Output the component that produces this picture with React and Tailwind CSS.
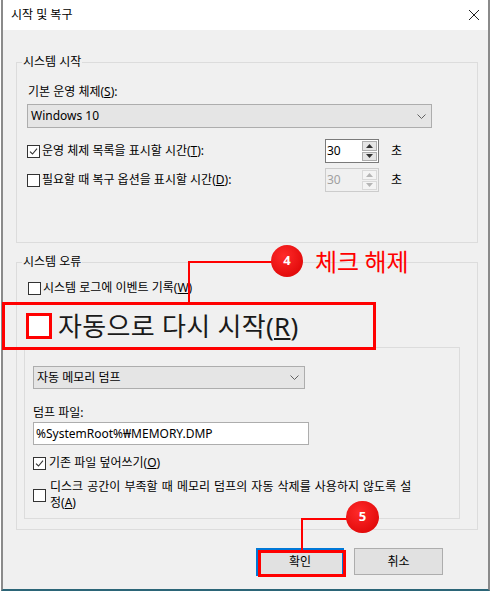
import React from 'react';

function Check({ checked }) {
  return (
    <span className="w-[13px] h-[13px] border border-[#333333] bg-white flex items-center justify-center shrink-0">
      {checked && (
        <svg width="9" height="9" viewBox="0 0 9 9">
          <path d="M1 4.6 L3.5 7 L8 1.6" stroke="#333333" strokeWidth="1.1" fill="none" />
        </svg>
      )}
    </span>
  );
}

function Chevron() {
  return (
    <svg width="9" height="5" viewBox="0 0 9 5">
      <path d="M0.5 0.5 L4.5 4.5 L8.5 0.5" stroke="#606060" strokeWidth="1" fill="none" />
    </svg>
  );
}

function Spin({ disabled }) {
  const arrow = disabled ? '#b5b5b5' : '#333333';
  return (
    <div
      className={
        'w-[54px] h-[24px] border flex ' +
        (disabled ? 'border-[#cccccc] bg-[#f0f0f0] text-[#a0a0a0]' : 'border-[#7a7a7a] bg-white text-black')
      }
    >
      <div className="flex-1 pl-[1px] text-[12px] leading-[22px]">30</div>
      <div className="w-[16px] flex flex-col gap-[1px] py-[1px] pr-[1px]">
        <div className={'flex-1 border flex items-center justify-center ' + (disabled ? 'border-[#d9d9d9] bg-[#f4f4f4]' : 'border-[#adadad] bg-[#e5e5e5]')}>
          <svg width="7" height="4" viewBox="0 0 7 4"><path d="M0 4 L3.5 0 L7 4 Z" fill={arrow} /></svg>
        </div>
        <div className={'flex-1 border flex items-center justify-center ' + (disabled ? 'border-[#d9d9d9] bg-[#f4f4f4]' : 'border-[#adadad] bg-[#e5e5e5]')}>
          <svg width="7" height="4" viewBox="0 0 7 4"><path d="M0 0 L3.5 4 L7 0 Z" fill={arrow} /></svg>
        </div>
      </div>
    </div>
  );
}

export default function App() {
  return (
    <div className="relative w-[491px] h-[591px] bg-white overflow-hidden font-['Noto_Sans','Noto_Sans_CJK_KR',sans-serif] text-[12px] text-black">
      <div className="ml-[1px] w-[489px] h-[591px] border-l-2 border-r-2 border-b-2 border-l-[#8a8a8a] border-r-[#8a8a8a] border-b-[#2b6577] flex flex-col">
        {/* title bar */}
        <div className="h-[30px] bg-white flex items-center justify-between pl-[8px] pr-[8px]">
          <span className="leading-[16px]">시작 및 복구</span>
          <svg width="12" height="12" viewBox="0 0 12 12">
            <path d="M1 1 L11 11 M11 1 L1 11" stroke="#222222" strokeWidth="1" />
          </svg>
        </div>

        <div className="flex-1 bg-[#f0f0f0] pt-[24px]">
          {/* 시스템 시작 */}
          <fieldset className="ml-[13px] w-[462px] border border-[#dcdcdc]">
            <legend className="ml-[5px] px-[1px] leading-[16px]">시스템 시작</legend>
            <div className="pl-[10px] pt-[14px] pb-[50px]">
              <div className="ml-[1px] leading-[16px]">
                기본 운영 체제(<u>S</u>):
              </div>
              <div className="mt-[4px] w-[405px] h-[24px] bg-[#e5e5e5] border border-[#adadad] flex items-center justify-between pl-[3px] pr-[5px]">
                <span className="leading-[16px]">Windows 10</span>
                <Chevron />
              </div>
              <div className="mt-[11px] flex items-center">
                <div className="w-[298px] flex items-center gap-[2px]">
                  <Check checked />
                  <span className="leading-[16px]">운영 체제 목록을 표시할 시간(<u>T</u>):</span>
                </div>
                <Spin />
                <span className="ml-[12px] leading-[16px]">초</span>
              </div>
              <div className="mt-[5px] flex items-center">
                <div className="w-[298px] flex items-center gap-[2px]">
                  <Check />
                  <span className="leading-[16px]">필요할 때 복구 옵션을 표시할 시간(<u>D</u>):</span>
                </div>
                <Spin disabled />
                <span className="ml-[12px] leading-[16px]">초</span>
              </div>
            </div>
          </fieldset>

          {/* 시스템 오류 */}
          <fieldset className="mt-[11px] ml-[13px] w-[462px] border border-[#dcdcdc]">
            <legend className="ml-[5px] px-[1px] leading-[16px]">시스템 오류</legend>
            <div className="pt-[10px] pb-[10px]">
              <div className="ml-[11px] flex items-center gap-[2px]">
                <Check />
                <span className="leading-[16px]">시스템 로그에 이벤트 기록(<u>W</u>)</span>
              </div>

              <div className="relative z-10 mt-[6px] -mb-[3px] -ml-[15px] w-[374px] h-[48px] border-[3px] border-[#ff0000] flex items-center pl-[21px] gap-[6px]">
                <span className="w-[26px] h-[26px] border-[3px] border-[#ff0000] bg-white shrink-0" />
                <span className="text-[26px] leading-[30px] text-[#1a1a1a] tracking-[0.3px]">
                  자동으로 다시 시작(<u>R</u>)
                </span>
              </div>

              <div className="ml-[7px] w-[436px] border border-[#dcdcdc] pl-[8px] pt-[18px] pb-[7px]">
                <div className="w-[272px] h-[23px] bg-[#e5e5e5] border border-[#adadad] flex items-center justify-between pl-[3px] pr-[5px]">
                  <span className="leading-[16px]">자동 메모리 덤프</span>
                  <Chevron />
                </div>
                <div className="mt-[16px] leading-[16px]">덤프 파일:</div>
                <div className="mt-[1px] w-[276px] h-[23px] bg-white border border-[#adadad] flex items-center pl-[2px]">
                  <span className="leading-[16px]">%SystemRoot%₩MEMORY.DMP</span>
                </div>
                <div className="mt-[10px] flex items-center gap-[3px]">
                  <Check checked />
                  <span className="leading-[16px]">기존 파일 덮어쓰기(<u>O</u>)</span>
                </div>
                <div className="mt-[8px] flex items-center gap-[4px]">
                  <Check />
                  <span className="leading-[16px] [word-spacing:1px]">
                    디스크 공간이 부족할 때 메모리 덤프의 자동 삭제를 사용하지 않도록 설
                    <br />
                    정(<u>A</u>)
                  </span>
                </div>
              </div>
            </div>
          </fieldset>

          {/* buttons */}
          <div className="mt-[18px] flex justify-end gap-[10px] pr-[45px]">
            <div className="relative">
              <div className="w-[88px] h-[28px] bg-[#e1e1e1] border-2 border-[#0078d7] flex items-center justify-center">
                확인
              </div>
              <div className="absolute left-[2px] top-[2px] w-[88px] h-[27px] border-[3px] border-[#ff0000]" />
            </div>
            <div className="w-[89px] h-[27px] bg-[#e1e1e1] border border-[#adadad] flex items-center justify-center">
              취소
            </div>
          </div>
        </div>
      </div>

      {/* callout 4 */}
      <div className="absolute left-[188px] top-[261px] w-[100px] h-[42px] border-l-2 border-t-2 border-[#ff0000] z-20" />
      <div className="absolute left-[271px] top-[245px] w-[32px] h-[32px] rounded-full bg-[radial-gradient(circle_at_40%_35%,#ff2a2a,#d80000)] z-30 flex items-center justify-center text-white font-bold text-[13px]">
        4
      </div>
      <div className="absolute left-[315px] top-[246px] z-30 text-[#ff0000] text-[24px] leading-[30px] font-['Noto_Sans_CJK_KR',sans-serif]">
        체크 해제
      </div>

      {/* callout 5 */}
      <div className="absolute left-[301px] top-[518px] w-[62px] h-[34px] border-l-2 border-t-2 border-[#ff0000] z-20" />
      <div className="absolute left-[346px] top-[501px] w-[33px] h-[32px] rounded-full bg-[radial-gradient(circle_at_40%_35%,#ff2a2a,#d80000)] z-30 flex items-center justify-center text-white font-bold text-[13px]">
        5
      </div>
    </div>
  );
}
